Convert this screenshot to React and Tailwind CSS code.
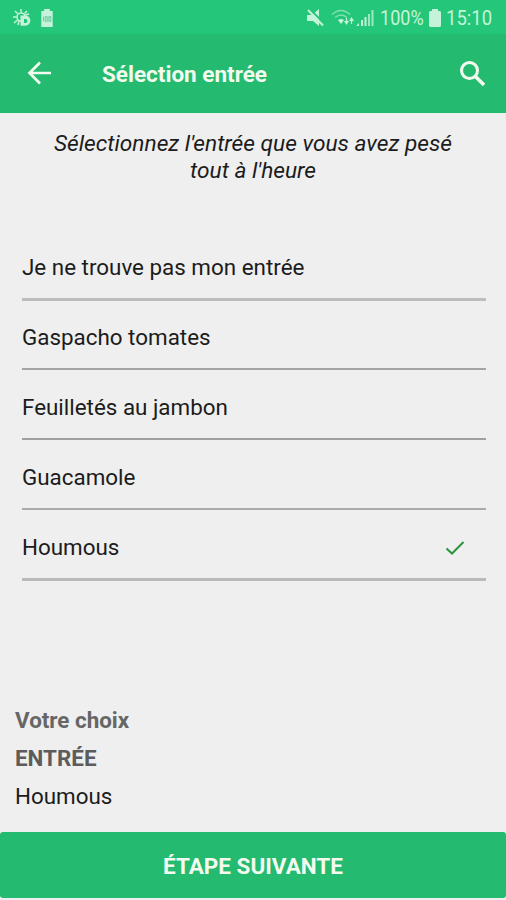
import React, { useState } from 'react';

const starters = [
  { name: 'Je ne trouve pas mon entrée', line: 'h-[3px] bg-[#bdbdbd]' },
  { name: 'Gaspacho tomates', line: 'h-[2px] bg-[#a3a3a3]' },
  { name: 'Feuilletés au jambon', line: 'h-[2px] bg-[#a0a0a0]' },
  { name: 'Guacamole', line: 'h-[2px] bg-[#a9a9a9]' },
  { name: 'Houmous', line: 'h-[3px] bg-[#bababa]' },
];

const StatusBar = () => (
  <div className="flex h-[34px] shrink-0 items-center bg-[#24c779] pt-[2px] text-[#c5f3d9]">
    <svg className="ml-[12px] h-[20px] w-[20px]" viewBox="0 0 20 20" fill="none">
      <circle cx="9" cy="9" r="4" stroke="currentColor" strokeWidth="1.6" />
      <path
        d="M9 4V1M5.5 5.5L3 3M12.5 5.5L15 3M4.5 9H1M5.5 12L2 15M7 13L6 17M13 7l4-1"
        stroke="currentColor"
        strokeWidth="1.5"
      />
      <path d="M8.500 7.500h4.800a5.100 5.100 0 0 1 0 10.200H8.500z" fill="currentColor" />
      <path d="M12 11h1.5a2 2 0 0 1 0 4H12z" fill="#24c779" />
    </svg>
    <svg className="ml-[8px] h-[18px] w-[14px]" viewBox="0 0 14 19">
      <path d="M4 0h6v2h3v17H1V2h3z" fill="currentColor" />
      <path d="M3.3 8v5M5.2 8h2v5h-2zM9 8h2v5H9z" stroke="#65c996" fill="none" />
    </svg>

    <svg className="ml-[253px] h-[18px] w-[17px]" viewBox="0 0 17 18">
      <path d="M0 6h5l7-6v17l-6-5H0z" fill="currentColor" />
      <path d="M1.500 -1L18 15" stroke="#24c779" strokeWidth="2" />
      <path d="M1 1L16 16.5" stroke="currentColor" strokeWidth="2" />
    </svg>
    <svg className="ml-[7px] h-[18px] w-[24px]" viewBox="0 0 24 18" fill="none">
      <path d="M1 5.500q9-8 18 0M4 8.500q6-5 12 0" stroke="currentColor" strokeWidth="1.500" opacity=".6" />
      <path d="M7 11q3-2 6 0l-3 4z" fill="currentColor" />
      <path d="M13 12h5l-2.500 4zM18 12l2.500-4 2.500 4z" fill="currentColor" />
      <path d="M15.500 9v4M20.500 11v4" stroke="currentColor" strokeWidth="1.300" />
    </svg>
    <svg className="ml-[1px] h-[18px] w-[18px]" viewBox="0 0 18 18">
      <path d="M0 17l3-3v3zM5 11h2v6H5zM8.500 8h2v9h-2z" fill="currentColor" />
      <path d="M12 5h2v12h-2zM15.500 1h2v16h-2z" fill="currentColor" opacity=".75" />
    </svg>
    <span className="ml-[6px] w-[46px] origin-left scale-x-[0.86] whitespace-nowrap text-[21px] leading-[34px]">100%</span>
    <svg className="ml-[3px] h-[18px] w-[12px]" viewBox="0 0 12 18">
      <path d="M3 0h6v2h2l1 1v14l-1 1H1l-1-1V3l1-1h2z" fill="currentColor" />
    </svg>
    <span className="ml-[5px] w-[48px] origin-left scale-x-[0.88] whitespace-nowrap text-[21px] leading-[34px]">15:10</span>
  </div>
);

const Header = () => (
  <header className="flex h-[79px] shrink-0 items-center bg-[#24ba70] text-[#f3fbef]">
    <button className="mb-[2px] ml-[27px]" aria-label="Retour">
      <svg className="h-[24px] w-[25px]" viewBox="0 0 25 24" fill="none" stroke="currentColor" strokeWidth="2.700">
        <path d="M2 12h22M13 1.500L2.500 12 13 22.500" />
      </svg>
    </button>
    <h1 className="ml-[50px] flex-1 pt-[2px] text-[22.500px] font-bold">Sélection entrée</h1>
    <button className="mr-[20px] mb-[1px]" aria-label="Rechercher">
      <svg className="h-[27px] w-[27px]" viewBox="0 0 27 27" fill="none" stroke="currentColor">
        <circle cx="10.500" cy="10.500" r="8" strokeWidth="3" />
        <path d="M16 16l9 9" strokeWidth="3.500" />
      </svg>
    </button>
  </header>
);

const App = () => {
  const [selected, setSelected] = useState('Houmous');

  return (
    <div className="flex h-[900px] w-[506px] flex-col overflow-hidden bg-[#efefef] font-['Roboto',sans-serif] text-[#1c1c1c]">
      <StatusBar />
      <Header />

      <p className="mt-[17px] text-center text-[22.700px] leading-[27px] italic">
        Sélectionnez l'entrée que vous avez pesé
        <br />
        tout à l'heure
      </p>

      <ul className="mx-[22px] mt-[47px] w-[464px]">
        {starters.map((item) => (
          <li key={item.name} className="flex h-[70px] flex-col">
            <button
              onClick={() => setSelected(item.name)}
              className="flex h-[67px] w-full items-center justify-between pt-[7px] text-left text-[22.400px]"
            >
              {item.name}
              {selected === item.name && (
                <svg className="mr-[21px] h-[16px] w-[20px]" viewBox="0 0 20 16" fill="none">
                  <path d="M1.500 8.500L7 13.500 18.500 2" stroke="#2c923b" strokeWidth="2" />
                </svg>
              )}
            </button>
            <div className={item.line} />
          </li>
        ))}
      </ul>

      <section className="mt-auto mb-[17px] ml-[15px] text-[22.400px] leading-[38px]">
        <h2 className="font-bold text-[#666666]">Votre choix</h2>
        <h3 className="font-bold text-[#5c5c5c]">ENTRÉE</h3>
        <p>{selected}</p>
      </section>

      <button className="mb-[2px] h-[66px] shrink-0 rounded-[3px] bg-[#24ba70] pt-[4px] text-[22.500px] font-bold text-[#f3fbef]">
        ÉTAPE SUIVANTE
      </button>
    </div>
  );
};

export default App;
